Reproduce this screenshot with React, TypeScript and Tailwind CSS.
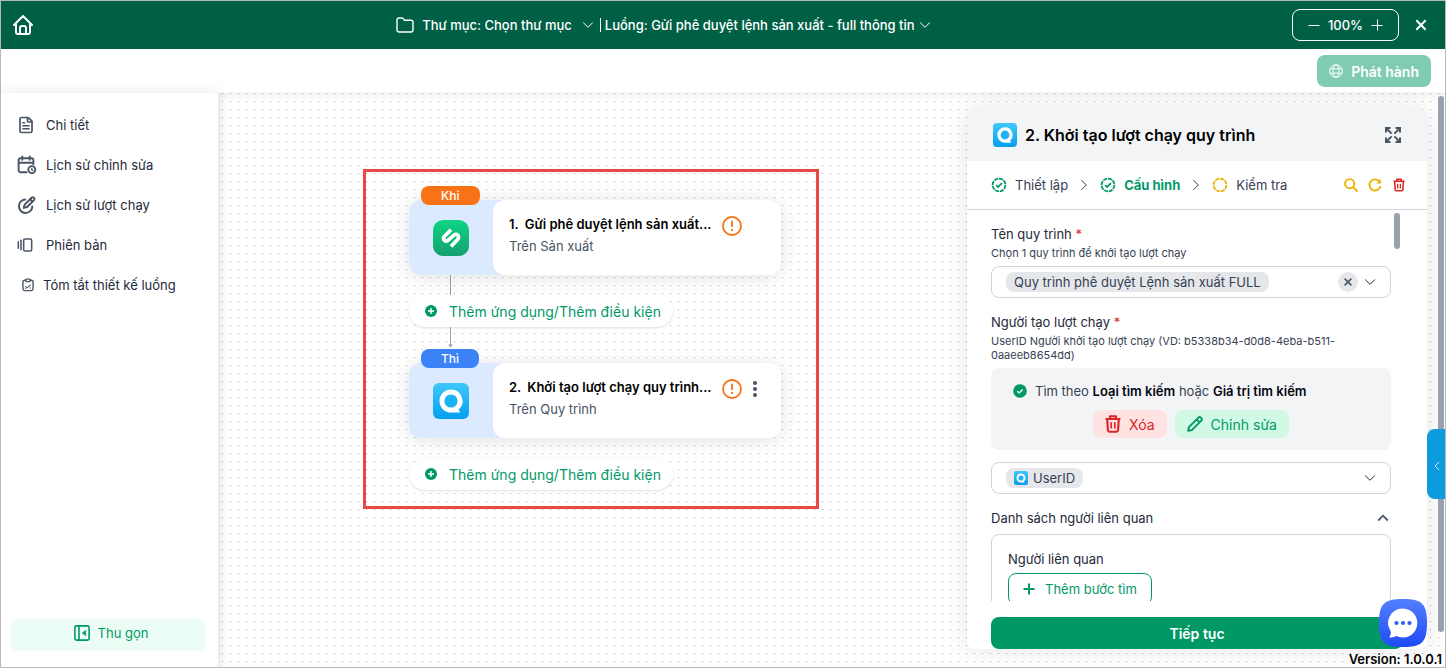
import React, { useState } from "react";
import { TbHome } from "react-icons/tb";
import { FileText, GalleryHorizontalEnd } from "lucide-react";

type IconProps = { className?: string };

function Chevron({ className = "" }: IconProps) {
  return (
    <svg viewBox="0 0 12 12" className={className} fill="none" stroke="currentColor" strokeWidth="1" aria-hidden="true">
      <path d="M1.2 3.5 6 8.3l4.8-4.8" />
    </svg>
  );
}

function Folder({ className = "" }: IconProps) {
  return (
    <svg viewBox="0 0 18 16" className={className} fill="none" stroke="currentColor" strokeWidth="1.4" strokeLinejoin="round" aria-hidden="true">
      <path d="M1 3a2 2 0 0 1 2-2h2.9c.5 0 1 .3 1.3.7L8.300 3.200H15a2 2 0 0 1 2 2V13a2 2 0 0 1-2 2H3a2 2 0 0 1-2-2Z" />
    </svg>
  );
}

function Globe({ className = "" }: IconProps) {
  return (
    <svg viewBox="0 0 14 14" className={className} fill="none" stroke="currentColor" strokeWidth="1" aria-hidden="true">
      <circle cx="7" cy="7" r="6.300" />
      <ellipse cx="7" cy="7" rx="2.900" ry="6.300" />
      <path d="M1.300 4.800h11.400M1.300 9.200h11.400" />
    </svg>
  );
}

function CalendarClock({ className = "" }: IconProps) {
  return (
    <svg viewBox="0 0 20 20" className={className} fill="none" stroke="currentColor" strokeWidth="1.900" strokeLinecap="round" strokeLinejoin="round" aria-hidden="true">
      <path d="M9.500 17.200H3.600A2 2 0 0 1 1.600 15.200V5.200a2 2 0 0 1 2-2h10.800a2 2 0 0 1 2 2v4M1.600 7.700h14.800M5.300 1.500v3.200M12.700 1.500v3.200" />
      <circle cx="14.800" cy="14.600" r="3.500" />
      <path d="M14.800 13.200v1.600l1 .5" strokeWidth="1.300" />
    </svg>
  );
}

function CirclePen({ className = "" }: IconProps) {
  return (
    <svg viewBox="0 0 20 20" className={className} fill="none" stroke="currentColor" strokeWidth="2" strokeLinecap="round" strokeLinejoin="round" aria-hidden="true">
      <path d="M8.200 4.500A6.700 6.700 0 1 0 15.300 11.600" />
      <path d="M6.800 12.900l.9-3.300 6.900-6.900a1.700 1.700 0 0 1 2.400 2.400L10.100 12z" />
      <path d="M13.200 4.200l2.400 2.400" />
    </svg>
  );
}

function ClipboardCheck({ className = "" }: IconProps) {
  return (
    <svg viewBox="0 0 14 16" className={className} fill="none" stroke="currentColor" strokeWidth="1.600" strokeLinecap="round" strokeLinejoin="round" aria-hidden="true">
      <path d="M4.400 2.600H3.200a2 2 0 0 0-2 2v7.800a2 2 0 0 0 2 2h7.600a2 2 0 0 0 2-2V4.600a2 2 0 0 0-2-2H9.600" />
      <rect x="4.400" y="1.300" width="5.200" height="2.800" rx="1" />
      <path d="M4.200 9.800l1.700 1.500 3.600-3.200M4.200 11.900h.1M9.500 11.300h.1" strokeWidth="1.200" />
    </svg>
  );
}

function PanelClose({ className = "" }: IconProps) {
  return (
    <svg viewBox="0 0 16 16" className={className} fill="none" stroke="currentColor" strokeWidth="1.600" strokeLinejoin="round" aria-hidden="true">
      <rect x=".9" y=".9" width="14.200" height="14.200" rx="1.600" />
      <path d="M5 1v14" />
      <path d="M11.700 5.200v5.600L8.300 8z" fill="currentColor" strokeWidth=".6" />
    </svg>
  );
}

function DashedRing({ className = "", checked }: IconProps & { checked: boolean }) {
  return (
    <svg viewBox="0 0 16 16" className={className} fill="none" stroke="currentColor" strokeWidth="1.800" aria-hidden="true">
      <circle cx="8" cy="8" r="6.400" pathLength="64" strokeDasharray="6.700 1.300" />
      {checked && <path d="M5.100 8.200l2 1.900 3.800-3.900" />}
    </svg>
  );
}

function Expand({ className = "" }: IconProps) {
  return (
    <svg viewBox="0 0 16 16" className={className} fill="none" stroke="currentColor" strokeWidth="2" aria-hidden="true">
      <path d="M1 5.500V1h4.500M10.500 1H15v4.500M15 10.500V15h-4.500M5.500 15H1v-4.500" />
      <path d="M1.500 1.500 6.600 6.600M14.500 1.500 9.400 6.600M14.500 14.500 9.400 9.400M1.500 14.500l5.100-5.100" />
    </svg>
  );
}

function Magnifier({ className = "" }: IconProps) {
  return (
    <svg viewBox="0 0 14 14" className={className} fill="none" stroke="currentColor" strokeWidth="1.900" strokeLinecap="round" aria-hidden="true">
      <circle cx="5.700" cy="5.700" r="4.600" />
      <path d="M9.200 9.200l3.800 3.800" />
    </svg>
  );
}

function Reload({ className = "" }: IconProps) {
  return (
    <svg viewBox="0 0 14 14" className={className} fill="none" stroke="currentColor" strokeWidth="1.900" strokeLinecap="round" aria-hidden="true">
      <path d="M12.300 8.800A5.600 5.600 0 1 1 11.200 3.200" />
      <path d="M12.900.9v4.600H8.200z" fill="currentColor" stroke="none" />
    </svg>
  );
}

function Trash({ className = "" }: IconProps) {
  return (
    <svg viewBox="0 0 16 18" className={className} fill="none" stroke="currentColor" strokeWidth="2.100" strokeLinejoin="round" aria-hidden="true">
      <path d="M.6 4h14.800M5 3.800V1.300h6v2.500M2.200 4l.7 11.300a1.500 1.500 0 0 0 1.500 1.400h7.200a1.500 1.500 0 0 0 1.500-1.400L13.800 4" />
      <path d="M6.200 7.200v6.400M9.800 7.200v6.400" strokeWidth="1.700" />
    </svg>
  );
}

function Pencil({ className = "" }: IconProps) {
  return (
    <svg viewBox="0 0 16 16" className={className} fill="none" stroke="currentColor" strokeWidth="1.900" strokeLinejoin="round" aria-hidden="true">
      <path d="M1.200 14.800l.7-3.600L11.400 1.700a1.700 1.700 0 0 1 2.400 0l.5.5a1.700 1.700 0 0 1 0 2.400L4.800 14.100zM9.600 3.500l2.900 2.900" />
    </svg>
  );
}

function Warning({ className = "" }: IconProps) {
  return (
    <svg viewBox="0 0 20 20" className={className} fill="none" stroke="currentColor" strokeWidth="1.800" role="img" aria-label="Cảnh báo">
      <circle cx="10" cy="10" r="9" />
      <path d="M10 4.800v6.200M10 13v2" />
    </svg>
  );
}

function PlusBadge({ className = "" }: IconProps) {
  return (
    <svg viewBox="0 0 12 12" className={className} aria-hidden="true">
      <circle cx="6" cy="6" r="6" fill="#009966" />
      <path d="M6 3v6M3 6h6" stroke="#fff" strokeWidth="1.400" />
    </svg>
  );
}

function CheckBadge({ className = "" }: IconProps) {
  return (
    <svg viewBox="0 0 14 14" className={className} fill="none" aria-hidden="true">
      <circle cx="7" cy="7" r="6.800" fill="#009966" />
      <path d="M4.300 7.200l1.900 1.700 3.500-3.500" stroke="#fff" strokeWidth="1.400" />
    </svg>
  );
}

function ProcessLogo({ className = "" }: IconProps) {
  return (
    <svg viewBox="0 0 36 36" className={className} aria-hidden="true">
      <defs>
        <linearGradient id="process-sky" x1="0" y1="0" x2="0" y2="1">
          <stop offset="0" stopColor="#41c8fa" />
          <stop offset="1" stopColor="#049ff0" />
        </linearGradient>
      </defs>
      <rect width="36" height="36" rx="6" fill="url(#process-sky)" />
      <path d="M18 6.500A11.500 11.500 0 1 0 18 29.500H27.200L25.600 26.600A11.500 11.500 0 0 0 18 6.500Z" fill="#fff" />
      <circle cx="18" cy="18" r="6.600" fill="#1cb2f4" />
    </svg>
  );
}

function ProductionLogo({ className = "" }: IconProps) {
  return (
    <svg viewBox="0 0 36 36" className={className} aria-hidden="true">
      <defs>
        <linearGradient id="production-green" x1="0" y1="0" x2="0" y2="1">
          <stop offset="0" stopColor="#0fd584" />
          <stop offset="1" stopColor="#14a070" />
        </linearGradient>
      </defs>
      <rect width="36" height="36" rx="10" fill="url(#production-green)" />
      <path
        d="M18 9.700L11.200 16.500A2.700 2.700 0 0 0 15 20.300L20.700 15.300A2.750 2.750 0 0 1 24.800 19.200L18 26.400"
        fill="none"
        stroke="#fff"
        strokeWidth="3.700"
        strokeLinejoin="round"
      />
    </svg>
  );
}

function Arrow() {
  return (
    <svg viewBox="0 0 7 21" className="ml-[38px] h-[21px] w-[7px] shrink-0 text-gray-400" fill="none" stroke="currentColor" aria-hidden="true">
      <path d="M3.500 0v20" />
      <path d="M1 17.500h5L3.500 20.500z" fill="currentColor" stroke="none" />
    </svg>
  );
}

type StepProps = {
  tag: string;
  tagClass: string;
  number: number;
  title: string;
  place: string;
  logo: React.ReactNode;
  menu?: boolean;
};

function StepCard({ tag, tagClass, number, title, place, logo, menu }: StepProps) {
  return (
    <article className="relative flex h-[75px] w-[372px] shrink-0 rounded-xl bg-blue-100 shadow-[0_2px_20px_rgba(0,0,0,0.12)]">
      <span className={`absolute -top-3.5 left-3 flex h-[19px] items-center rounded-lg px-5 text-xs font-medium text-white ${tagClass}`}>
        {tag}
      </span>
      <div className="flex w-[84px] shrink-0 items-center justify-center">{logo}</div>
      <div className="flex min-w-0 flex-1 items-start gap-2.5 rounded-xl bg-white pt-4 pl-4">
        <div className="min-w-0">
          <h2 className="flex gap-1.5 text-[13px] leading-4 font-semibold text-black">
            <span>{number}.</span>
            <span>{title}</span>
          </h2>
          <p className="mt-1.5 text-[13px] leading-4 text-gray-600">{place}</p>
        </div>
        <Warning className="size-5 shrink-0 text-[#f97316]" />
        {menu && (
          <button type="button" aria-label="Tùy chọn" className="-ml-1 flex h-5 w-3.5 shrink-0 items-center justify-center text-gray-600">
            <svg viewBox="0 0 4 16" className="h-4 w-1" fill="currentColor" aria-hidden="true">
              <circle cx="2" cy="2" r="2" />
              <circle cx="2" cy="8" r="2" />
              <circle cx="2" cy="14" r="2" />
            </svg>
          </button>
        )}
      </div>
    </article>
  );
}

function AddButton() {
  return (
    <button type="button" className="flex h-8 shrink-0 items-center gap-3 rounded-full bg-white pr-3 pl-4 text-sm/[21px] text-[#009966] shadow-sm">
      <PlusBadge className="size-3" />
      Thêm ứng dụng/Thêm điều kiện
    </button>
  );
}

const menuItems = [
  { label: "Chi tiết", icon: <FileText className="size-[18px]" strokeWidth={2.3} /> },
  { label: "Lịch sử chỉnh sửa", icon: <CalendarClock className="size-5" /> },
  { label: "Lịch sử lượt chạy", icon: <CirclePen className="size-5" /> },
  { label: "Phiên bản", icon: <GalleryHorizontalEnd className="size-4" strokeWidth={2.3} /> },
];

function Sidebar() {
  return (
    <aside className="relative flex w-[217px] shrink-0 flex-col justify-between bg-white px-[9px] pt-3 pb-4 shadow-[0_0_14px_rgba(0,0,0,0.09)]">
      <nav className="flex flex-col text-[13px]/5 text-gray-800">
        {menuItems.map((item) => (
          <a key={item.label} href="#" className="flex h-10 items-center gap-2 pl-[7px]">
            <span className="flex w-[21px] items-center text-gray-600">{item.icon}</span>
            {item.label}
          </a>
        ))}
        <a href="#" className="flex h-10 items-center gap-2 pl-[11px]">
          <ClipboardCheck className="h-3.5 w-3.5 text-gray-600" />
          Tóm tắt thiết kế luồng
        </a>
      </nav>
      <button type="button" className="mr-[3px] flex h-8 items-center justify-center gap-2 rounded-lg bg-emerald-50 pb-1 pl-1.5 text-[13px]/5 text-[#009966]">
        <PanelClose className="size-4" />
        Thu gọn
      </button>
    </aside>
  );
}

function Header() {
  const [zoom, setZoom] = useState(100);
  return (
    <header className="flex h-12 shrink-0 items-center justify-between bg-[#006045] pr-4 pl-2.5 text-[13px]/5 font-medium text-white">
      <a href="#" aria-label="Trang chủ">
        <TbHome className="size-6" />
      </a>
      <div className="flex items-center">
        <Folder className="mr-2 h-4 w-[18px]" />
        <label className="flex items-center">
          Thư mục:&nbsp;
          <select className="appearance-none bg-transparent [field-sizing:content]">
            <option>Chọn thư mục</option>
          </select>
          <Chevron className="ml-2.5 size-3" />
        </label>
        <span className="mr-1 ml-1.5 h-3.5 w-px bg-white" />
        <button type="button" className="flex items-center gap-1">
          Luồng: Gửi phê duyệt lệnh sản xuất - full thông tin
          <Chevron className="size-3" />
        </button>
      </div>
      <div className="flex items-center gap-3.5">
        <div className="flex h-8 items-center gap-2 rounded-lg border border-white px-[15px]">
          <button type="button" aria-label="Thu nhỏ" onClick={() => setZoom(zoom - 10)}>
            <svg viewBox="0 0 12 12" className="size-3" stroke="currentColor" aria-hidden="true">
              <path d="M.5 6.500h11" />
            </svg>
          </button>
          <span>{zoom}%</span>
          <button type="button" aria-label="Phóng to" onClick={() => setZoom(zoom + 10)}>
            <svg viewBox="0 0 12 12" className="size-3" stroke="currentColor" aria-hidden="true">
              <path d="M.5 6.500h11M6.500.5v11" />
            </svg>
          </button>
        </div>
        <button type="button" aria-label="Đóng">
          <svg viewBox="0 0 16 16" className="size-4" stroke="currentColor" strokeWidth="2" aria-hidden="true">
            <path d="M3.300 3.300l9.400 9.400M12.700 3.300l-9.400 9.400" />
          </svg>
        </button>
      </div>
    </header>
  );
}

function Panel() {
  return (
    <section className="relative mt-4 mr-[18px] mb-[18px] flex w-[460px] shrink-0 flex-col rounded-lg bg-white shadow-[0_0_24px_rgba(0,0,0,0.11)]">
      <header className="flex h-[52px] shrink-0 items-center gap-2 rounded-t-lg bg-gray-100 pr-[26px] pl-[26px]">
        <ProcessLogo className="size-6" />
        <h1 className="flex-1 text-base font-semibold text-black">2. Khởi tạo lượt chạy quy trình</h1>
        <button type="button" aria-label="Mở rộng" className="text-gray-600">
          <Expand className="size-4" />
        </button>
      </header>

      <div className="flex h-[49px] shrink-0 items-center justify-between border-b border-gray-300 pr-[21px] pl-6 text-[13px]/5 text-gray-700">
        <ol className="flex items-center gap-2">
          <li className="flex items-center gap-2">
            <DashedRing checked className="size-4 text-[#009966]" />
            Thiết lập
          </li>
          <Chevron className="mx-0.5 size-3 -rotate-90" />
          <li className="flex items-center gap-2 font-bold text-[#009966]">
            <DashedRing checked className="size-4" />
            Cấu hình
          </li>
          <Chevron className="mx-0.5 size-3 -rotate-90" />
          <li className="flex items-center gap-2">
            <DashedRing checked={false} className="size-4 text-[#eab308]" />
            Kiểm tra
          </li>
        </ol>
        <div className="flex items-center gap-2.5">
          <button type="button" aria-label="Tìm kiếm" className="text-[#eab308]">
            <Magnifier className="size-3.5" />
          </button>
          <button type="button" aria-label="Làm mới" className="text-[#eab308]">
            <Reload className="size-3.5" />
          </button>
          <button type="button" aria-label="Xóa bước" className="flex w-3.5 justify-center text-[#dc2626]">
            <Trash className="h-3.5 w-3" />
          </button>
        </div>
      </div>

      <div className="relative flex min-h-0 flex-1 flex-col overflow-hidden pt-3.5 pr-9 pl-6 text-[13px]/5 text-gray-800">
        <span className="absolute top-[3px] right-[27px] h-9 w-1.5 rounded-full bg-gray-400" />
        <div className="flex shrink-0 flex-col">
          <label htmlFor="process">
            Tên quy trình <span className="text-[#dc2626]">*</span>
          </label>
          <p className="mt-0.5 text-[11px] leading-[14px] text-gray-700">Chọn 1 quy trình để khởi tạo lượt chạy</p>
          <div className="mt-1.5 flex h-8 items-center rounded-lg border border-gray-300 pr-3.5 pl-3.5">
            <select id="process" className="h-5 appearance-none rounded-lg bg-gray-200 px-2 text-gray-700 [field-sizing:content]">
              <option>Quy trình phê duyệt Lệnh sản xuất FULL</option>
            </select>
            <button type="button" aria-label="Bỏ chọn" className="ml-auto flex size-5 items-center justify-center rounded-full bg-gray-200 text-gray-600">
              <svg viewBox="0 0 8 8" className="size-2" stroke="currentColor" strokeWidth="1.600" aria-hidden="true">
                <path d="M.6.6l6.800 6.800M7.400.6.6 7.400" />
              </svg>
            </button>
            <Chevron className="ml-1.5 size-3" />
          </div>
        </div>

        <div className="mt-3.5 flex shrink-0 flex-col">
          <label htmlFor="creator">
            Người tạo lượt chạy <span className="text-[#dc2626]">*</span>
          </label>
          <p className="mt-0.5 max-w-[360px] text-[11px] leading-[14px] text-gray-700">
            UserID Người khởi tạo lượt chạy (VD: b5338b34-d0d8-4eba-b511-0aaeeb8654dd)
          </p>
          <div className="mt-1.5 flex flex-col gap-2 rounded-lg bg-gray-100 p-3">
            <p className="flex items-center gap-2 pl-2.5 leading-[22px]">
              <CheckBadge className="size-3.5" />
              <span className="text-gray-700">
                Tìm theo <b className="font-semibold text-gray-950">Loại tìm kiếm</b> hoặc{" "}
                <b className="font-semibold text-gray-950">Giá trị tìm kiếm</b>
              </span>
            </p>
            <div className="flex justify-center gap-2 text-sm/[21px]">
              <button type="button" className="flex h-7 items-center gap-2 rounded-lg bg-red-100 px-3 text-[#dc2626]">
                <Trash className="h-[18px] w-4" />
                Xóa
              </button>
              <button type="button" className="flex h-7 items-center gap-2 rounded-lg bg-emerald-100 px-3 text-[#009966]">
                <Pencil className="size-4" />
                Chỉnh sửa
              </button>
            </div>
          </div>
          <div className="mt-3 flex h-8 items-center justify-between rounded-lg border border-gray-300 px-3.5">
            <span className="flex h-5 items-center gap-[5px] rounded-lg bg-gray-200 px-2">
              <ProcessLogo className="size-3.5" />
              <select id="creator" className="h-5 appearance-none bg-transparent text-gray-700 [field-sizing:content]">
                <option>UserID</option>
              </select>
            </span>
            <Chevron className="size-3" />
          </div>
        </div>

        <button type="button" className="mt-3.5 flex shrink-0 items-center justify-between pr-0.5">
          Danh sách người liên quan
          <svg viewBox="0 0 12 8" className="h-2 w-3 text-gray-600" fill="none" stroke="currentColor" strokeWidth="1.800" aria-hidden="true">
            <path d="M1.200 6.500 6 1.700l4.800 4.800" />
          </svg>
        </button>
        <div className="mt-1.5 flex shrink-0 flex-col items-start gap-1 rounded-lg border border-gray-300 px-4 py-3.5">
          <p>Người liên quan</p>
          <button type="button" className="flex h-8 items-center gap-2.5 rounded-lg border border-[#009966] px-3.5 text-[#009966]">
            <svg viewBox="0 0 12 12" className="size-3" stroke="currentColor" strokeWidth="2" aria-hidden="true">
              <path d="M.5 6h11M6 .5v11" />
            </svg>
            Thêm bước tìm
          </button>
        </div>
      </div>

      <div className="shrink-0 pt-4 pr-6 pl-6">
        <button type="button" className="flex h-8 w-full items-center justify-center rounded-lg bg-[#009966] text-sm/[21px] font-semibold text-white">
          Tiếp tục
        </button>
      </div>
    </section>
  );
}

export default function App() {
  return (
    <div className="flex h-screen min-h-[600px] flex-col overflow-hidden border border-[#b8b8b8] bg-white font-['Inter','Liberation_Sans',sans-serif]">
      <Header />
      <div className="flex h-11 shrink-0 items-center justify-end pr-3.5">
        <button type="button" className="flex h-8 items-center gap-2 rounded-lg bg-[#80ccb2] px-3 text-sm/[21px] font-semibold text-white">
          <Globe className="size-3.5" />
          Phát hành
        </button>
      </div>

      <div className="flex min-h-0 flex-1">
        <Sidebar />
        <main className="relative flex min-w-0 flex-1 bg-[conic-gradient(from_270deg_at_1px_1px,#a8a8a8_90deg,transparent_0)] bg-[length:8px_8px] bg-[position:4px_0px] shadow-[inset_0_6px_8px_-4px_rgba(0,0,0,0.08),inset_6px_0_8px_-4px_rgba(0,0,0,0.06)]">
          <div className="relative min-w-0 flex-1">
            <div className="absolute top-[76px] left-[145px] flex h-[340px] w-[456px] flex-col items-start border-3 border-[#ea4a45] pt-7 pl-[43px]">
              <StepCard
                tag="Khi"
                tagClass="bg-[#f97316]"
                number={1}
                title="Gửi phê duyệt lệnh sản xuất..."
                place="Trên Sản xuất"
                logo={<ProductionLogo className="size-9" />}
              />
              <span className="ml-[41px] h-5 w-px bg-gray-400" />
              <AddButton />
              <Arrow />
              <div className="mt-[15px]">
                <StepCard
                  tag="Thì"
                  tagClass="bg-[#3b82f6]"
                  number={2}
                  title="Khởi tạo lượt chạy quy trình..."
                  place="Trên Quy trình"
                  logo={<ProcessLogo className="size-9" />}
                  menu
                />
              </div>
              <span className="h-5 w-px" />
              <AddButton />
            </div>
          </div>

          <Panel />

          <span className="absolute top-[3px] right-px h-[536px] w-1.5 rounded-full bg-gray-400" />
          <button
            type="button"
            aria-label="Mở bảng bên"
            className="absolute top-[336px] right-0 flex h-[70px] w-[18px] items-center justify-center rounded-l-lg bg-[#0c9bdc] pt-1 pl-0.5 text-white"
          >
            <Chevron className="size-2.5 rotate-90" />
          </button>
          <button type="button" aria-label="Trò chuyện" className="absolute right-[18px] bottom-5 size-12">
            <svg viewBox="0 0 48 48" className="size-12" aria-hidden="true">
              <defs>
                <linearGradient id="chat-blue" x1="0" y1="0" x2="0" y2="1">
                  <stop offset="0" stopColor="#5480ff" />
                  <stop offset="1" stopColor="#1f4af5" />
                </linearGradient>
              </defs>
              <path d="M24 0c19 0 24 5 24 24s-5 24-24 24S0 43 0 24 5 0 24 0Z" fill="url(#chat-blue)" />
              <path d="M24 9.500A14.500 14.500 0 1 1 17.400 37c-2.200 1.300-4.700 1.700-7.200 1.200 1.400-1.800 1.900-3.700 1.500-6A14.500 14.500 0 0 1 24 9.500Z" fill="#fff" />
              <circle cx="17.500" cy="24" r="2.100" fill="#2f5cf8" />
              <circle cx="24" cy="24" r="2.100" fill="#2f5cf8" />
              <circle cx="30.500" cy="24" r="2.100" fill="#2f5cf8" />
            </svg>
          </button>
          <p className="absolute right-[3px] bottom-0 text-[13px] leading-4 font-semibold text-black">Version: 1.0.0.1</p>
        </main>
      </div>
    </div>
  );
}
